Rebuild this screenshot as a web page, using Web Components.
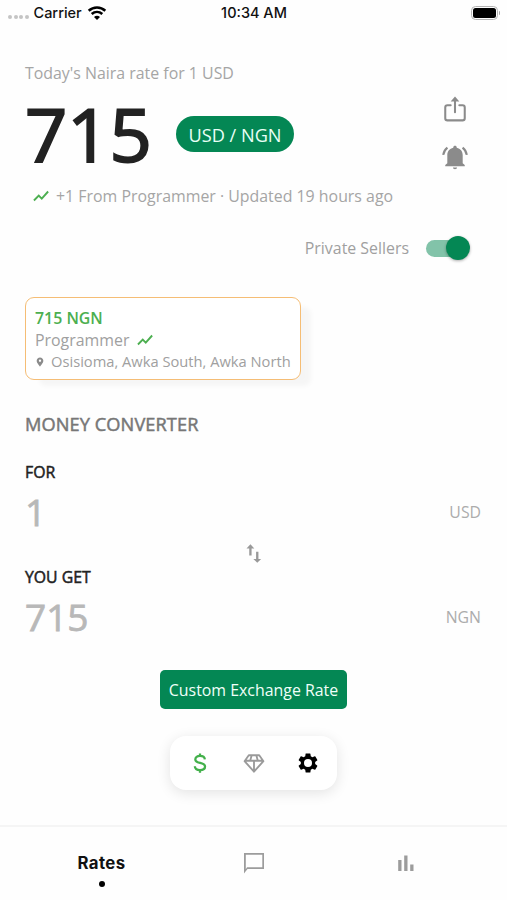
<!DOCTYPE html>
<html lang="en">
<head>
<meta charset="utf-8">
<title>Naira rates</title>
<style>
body{margin:0;background:#fefefe;font-family:"Open Sans","Noto Sans",sans-serif}
</style>
</head>
<body>
<rate-app></rate-app>
<script>
const define=(name,html)=>customElements.define(name,class extends HTMLElement{
  constructor(){super();this.attachShadow({mode:'open'}).innerHTML=html;}
});

const icons={
trend:'<path d="M2.600 18 9 11.500l4 4L21.500 6" fill="none" stroke="currentColor" stroke-width="2.500"/>',
share:'<path d="M8 8.500H5A2 2 0 0 0 3 10.500V20.500A2 2 0 0 0 5 22.500H19A2 2 0 0 0 21 20.500V10.500A2 2 0 0 0 19 8.500H16M12 15V3" fill="none" stroke="currentColor" stroke-width="1.900" stroke-linecap="round"/><path d="M8 5 12 .5 16 5z"/>',
bell:'<path d="M12 1.200c-.9 0-1.600.6-1.600 1.400v.5C7 3.800 4.900 6.500 4.900 9.800v7.400L3 19v1h18v-1l-1.900-1.800V9.800c0-3.300-2.100-6-5.500-6.700v-.5c0-.8-.7-1.400-1.600-1.400zM10.100 21.200h3.800c0 1-.9 1.600-1.900 1.600s-1.900-.6-1.900-1.600z"/><path d="M5 2.800Q2 5 1.100 9.600M19 2.800Q22 5 22.900 9.600" fill="none" stroke="currentColor" stroke-width="2"/>',
pin:'<path d="M12 1C7.600 1 4 4.500 4 9c0 5.500 8 14 8 14s8-8.500 8-14c0-4.500-3.600-8-8-8zm0 10.800a2.800 2.800 0 1 1 0-5.600 2.800 2.800 0 0 1 0 5.600z"/>',
swap:'<path d="M7.700 1 3 6h3.300v8.500h2.800V6h3.300zM17.300 18.500V10h-2.800v8.500h-3.300l4.700 4.500 4.700-4.500z"/>',
dollar:'<path d="M12 1.500v3M12 19.500v3M17.300 8c-.3-2.200-2.300-3.700-5.300-3.700-3.100 0-5.100 1.500-5.100 3.800 0 5.200 10.600 2.500 10.600 7.800 0 2.400-2.200 3.900-5.500 3.900s-5.500-1.600-5.600-4.200" fill="none" stroke="currentColor" stroke-width="2.500"/>',
gem:'<path d="M6.300 3.500h11.400L22.300 10 12 21.500 1.700 10zM1.700 9.500h20.600M9.500 3.500 7.800 9.500M14.500 3.500l1.700 6M12 9.500v11.500" fill="none" stroke="currentColor" stroke-width="2" stroke-linejoin="round"/>',
gear:'<path fill-rule="evenodd" d="M19.140 12.940c.04-.3.06-.61.06-.94 0-.32-.02-.64-.07-.94l2.030-1.580a.49.49 0 0 0 .12-.61l-1.920-3.320a.488.488 0 0 0-.59-.22l-2.390.96c-.5-.38-1.030-.7-1.620-.94l-.36-2.540a.484.484 0 0 0-.48-.41h-3.840c-.24 0-.43.17-.47.41l-.36 2.540c-.59.24-1.130.57-1.620.94l-2.390-.96c-.22-.08-.47 0-.59.22L2.740 8.870c-.12.21-.08.47.12.61l2.030 1.580c-.05.3-.09.63-.09.94s.02.64.07.94l-2.030 1.580a.49.49 0 0 0-.12.61l1.920 3.320c.12.22.37.29.59.22l2.390-.96c.5.38 1.030.7 1.620.94l.36 2.540c.05.24.24.41.48.41h3.840c.24 0 .44-.17.47-.41l.36-2.540c.59-.24 1.130-.56 1.620-.94l2.390.96c.22.08.47 0 .59-.22l1.920-3.320c.12-.22.07-.47-.12-.61l-2.010-1.580zM12 16a4 4 0 1 1 0-8 4 4 0 0 1 0 8z"/>',
chat:'<path d="M2 22.500V2h20v16H5.500zM3.800 18.300 5 16.300H20.300V3.700H3.800z" fill-rule="evenodd"/>',
bars:'<path d="M4.200 9h3.300V20H4.200zM10.200 4.500h3.300V20h-3.300zM16.200 13.500h3.300V20h-3.300z"/>',
wifi:'<path d="M1.500 8.500C7.500 3 16.500 3 22.500 8.500M5.300 12.700c4-3.600 9.400-3.600 13.400 0" fill="none" stroke="currentColor" stroke-width="3.200"/><path d="M8.200 16.300c2.300-2 5.300-2 7.600 0L12 20.300z"/>'
};
customElements.define('app-icon',class extends HTMLElement{
  connectedCallback(){
    if(this.shadowRoot)return;
    this.attachShadow({mode:'open'}).innerHTML=`<style>:host{display:block;flex:none;width:24px;height:24px}svg{display:block;width:100%;height:100%;fill:currentColor}</style><svg viewBox="0 0 24 24">${icons[this.getAttribute('name')]}</svg>`;
  }
});

define('status-bar',`<style>
:host{display:grid;grid-template-columns:1fr auto 1fr;align-items:center;height:26px;padding:0 7px 0 8px;font:500 14.500px/26px Inter,sans-serif;color:#111}
.l{display:flex;align-items:center}
.dots{display:flex;gap:1.500px;margin:7px 5px 0 0}
.dots i{width:4px;height:4px;border-radius:50%;background:#c4c4c4}
app-icon{width:20px;height:19px;margin-left:5px;color:#000}
.b{justify-self:end;display:flex;align-items:center;gap:1px}
.c{box-sizing:border-box;width:27px;height:14px;border:1.500px solid #b4b4b4;border-radius:4.500px;padding:1px}
.c:before{content:"";display:block;height:100%;background:#000;border-radius:2.500px}
.t{width:1.500px;height:4px;background:#aaa;border-radius:0 2px 2px 0}
</style><div class="l"><span class="dots"><i></i><i></i><i></i><i></i></span><span>Carrier</span><app-icon name="wifi"></app-icon></div><span>10:34 AM</span><div class="b"><span class="c"></span><span class="t"></span></div>`);

define('currency-pill',`<style>:host{display:block;box-sizing:border-box;width:118px;height:36px;padding-top:1px;border-radius:18px;background:#048754;color:#e9fff6;font-size:18.200px;line-height:36px;text-align:center;white-space:nowrap}</style><slot></slot>`);

define('rate-header',`<style>
:host{display:grid;grid-template-columns:1fr auto;padding:36px 39px 0 25px;color:#a5a5a5;font-size:15.900px;line-height:22px}
.rate{display:flex;align-items:center;gap:26px;height:90px;margin:5px 0}
.num{font-size:74px;line-height:90px;-webkit-text-stroke:2px #222;color:#222;width:125px}
.trend{display:flex;align-items:center;white-space:nowrap;padding-top:1px}
.trend app-icon{width:18px;height:18px;margin:0 6px 0 7px;color:#4caf50}
.actions{display:flex;flex-direction:column;gap:20px;padding-top:33px;color:#8b8b8b}
.actions app-icon{width:26px;height:28px}
.actions app-icon+app-icon{height:29px}
</style><div><div>Today's Naira rate for 1 USD</div><div class="rate"><span class="num">715</span><currency-pill>USD / NGN</currency-pill></div><div class="trend"><app-icon name="trend"></app-icon>+1 From Programmer · Updated 19 hours ago</div></div>
<div class="actions"><app-icon name="share"></app-icon><app-icon name="bell"></app-icon></div>`);

define('toggle-switch',`<style>
:host{display:flex;align-items:center;width:44px;height:24px}
.track{width:36px;height:17px;border-radius:9px;background:#82c3a9}
.thumb{width:24px;height:24px;margin-left:-16px;border-radius:50%;background:#048754;box-shadow:0 1px 3px #0005}
</style><span class="track"></span><span class="thumb"></span>`);

define('sellers-row',`<style>
:host{display:flex;align-items:center;justify-content:flex-end;gap:17px;height:24px;padding:29px 37px 0 0;color:#a0a0a0;font-size:15.900px}
span{line-height:24px}
</style><span><slot></slot></span><toggle-switch></toggle-switch>`);

define('seller-card',`<style>
:host{display:block;box-sizing:border-box;width:275.500px;height:83px;margin:37px 0 0 25px;padding:9px 0 0 9px;border:1.500px solid #f5bd75;border-radius:9px;background:#fff;box-shadow:12px 8px 5px -2px #00000009;color:#a0a0a0;font-size:15.900px;line-height:22px;white-space:nowrap}
.price{font-weight:600;color:#4caf50}
div{display:flex;align-items:center}
.who app-icon{width:18px;height:18px;margin-left:7px;color:#4caf50}
.where{font-size:14.700px;line-height:21px}
.where app-icon{width:10px;height:10px;margin-right:6px;color:#8b8b8b}
</style><div class="price"><slot name="price"></slot></div><div class="who"><slot></slot><app-icon name="trend"></app-icon></div><div class="where"><app-icon name="pin"></app-icon><slot name="place"></slot></div>`);

define('amount-field',`<style>
:host{display:block}
.label{font-size:15.800px;line-height:24px;-webkit-text-stroke:.5px #222;color:#222}
.row{display:flex;align-items:center;justify-content:space-between;height:56px;color:#b8b8b8}
.value{font-size:37px;line-height:56px;-webkit-text-stroke:.8px #b8b8b8}
.unit{font-size:15.800px;color:#acacac}
</style><div class="label"><slot name="label"></slot></div><div class="row"><span class="value"><slot></slot></span><span class="unit"><slot name="unit"></slot></span></div>`);

define('money-converter',`<style>
:host{display:block;padding:31px 26px 0 25px}
h2{margin:0 0 23px;font-size:18.200px;line-height:26px;font-weight:400;letter-spacing:.1px;-webkit-text-stroke:.5px #777;color:#777}
app-icon{width:20px;height:21px;margin:3px auto 1px;position:relative;left:1px;color:#999}
</style><h2>MONEY CONVERTER</h2>
<amount-field><span slot="label">FOR</span>1<span slot="unit">USD</span></amount-field>
<app-icon name="swap"></app-icon>
<amount-field><span slot="label">YOU GET</span>715<span slot="unit">NGN</span></amount-field>`);

define('primary-button',`<style>:host{display:block;width:187px;height:39px;margin:25px auto 0;border-radius:5px;background:#048754;color:#f0fff9;font-size:15.900px;line-height:40px;text-align:center;white-space:nowrap}</style><slot></slot>`);

define('quick-tools',`<style>
:host{display:flex;justify-content:space-between;align-items:center;box-sizing:border-box;width:167px;height:54px;margin:27px auto 0;padding:0 17px 0 19px;border-radius:16px;background:#fff;box-shadow:0 3px 14px #0000001c}
app-icon{width:22px;height:22px}
app-icon[name=dollar]{color:#43b04b}app-icon[name=gem]{color:#9a9a9a}app-icon[name=gear]{width:24px;height:24px;color:#000}
</style><app-icon name="dollar"></app-icon><app-icon name="gem"></app-icon><app-icon name="gear"></app-icon>`);

define('tab-bar',`<style>
:host{display:grid;grid-template-columns:repeat(3,152px);justify-content:center;box-sizing:border-box;height:75px;border-top:2px solid #f5f5f5;color:#9c9c9c}
div{display:flex;flex-direction:column;align-items:center;padding-top:24px}
.on{color:#111;font:700 16.800px/24px Inter,sans-serif;letter-spacing:.4px}
.on i{width:6px;height:6px;margin-top:6px;border-radius:50%;background:#000}
</style><div class="on">Rates<i></i></div><div><app-icon name="chat"></app-icon></div><div><app-icon name="bars"></app-icon></div>`);

define('rate-app',`<style>:host{display:flex;flex-direction:column;height:900px;overflow:hidden}tab-bar{margin-top:auto}</style>
<status-bar></status-bar>
<rate-header></rate-header>
<sellers-row>Private Sellers</sellers-row>
<seller-card><span slot="price">715 NGN</span>Programmer<span slot="place">Osisioma, Awka South, Awka North</span></seller-card>
<money-converter></money-converter>
<primary-button>Custom Exchange Rate</primary-button>
<quick-tools></quick-tools>
<tab-bar></tab-bar>`);
</script>
</body>
</html>
